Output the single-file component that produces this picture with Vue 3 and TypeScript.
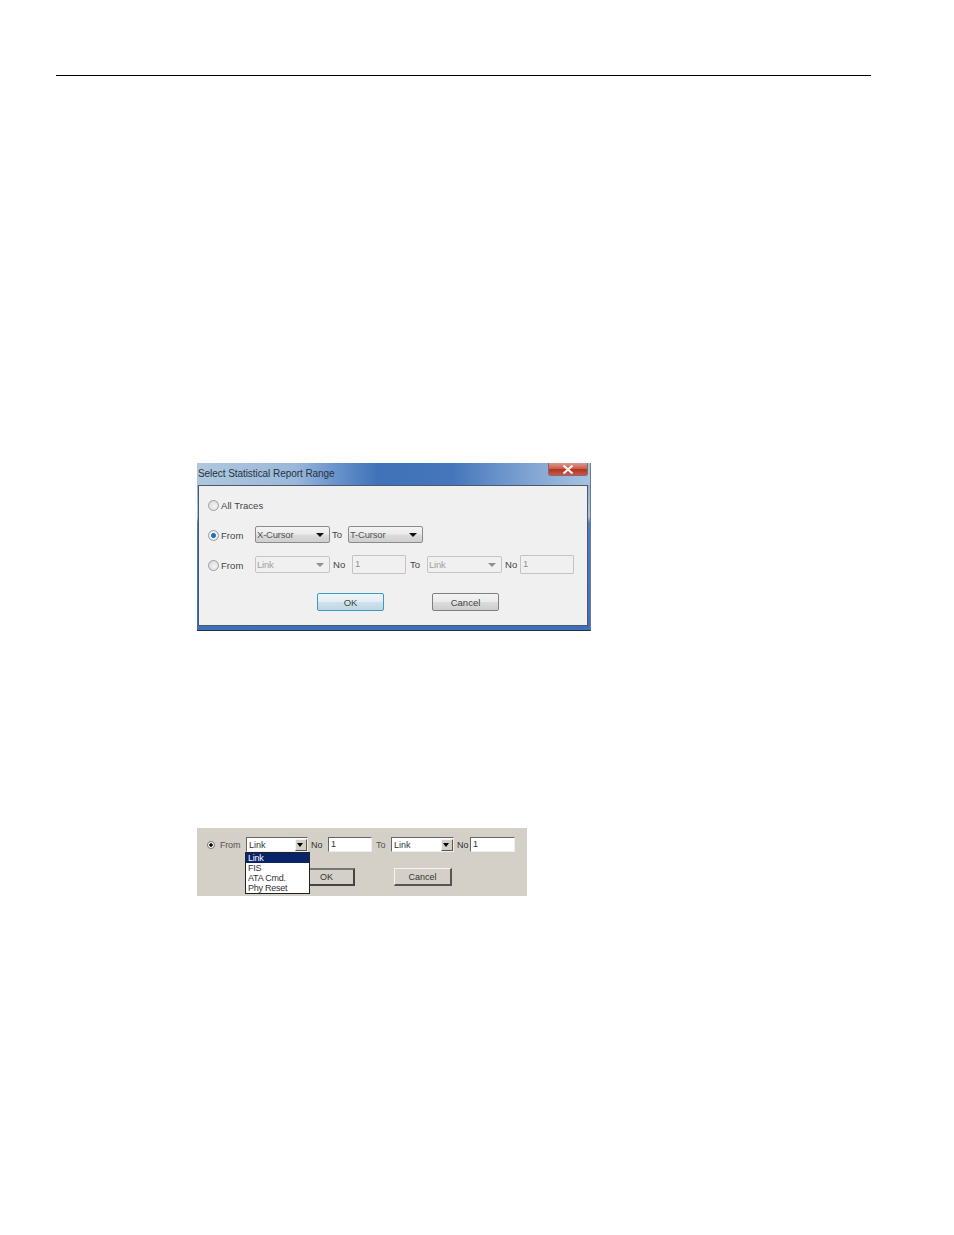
<script setup lang="ts">
const listItems: string[] = ['Link', 'FIS', 'ATA Cmd.', 'Phy Reset']
</script>

<template>
  <div class="page">
    <div class="rule"></div>

    <!-- Windows 7 style dialog -->
    <div class="dlg">
      <div class="dlg-title">
        <span>Select Statistical Report Range</span>
        <div class="dlg-close">
          <svg width="12" height="9" viewBox="0 0 12 9">
            <path d="M1.5 0.5 L10.5 8.5 M10.5 0.5 L1.5 8.5" stroke="#f4f0f0" stroke-width="2.2" fill="none" />
          </svg>
        </div>
      </div>
      <div class="dlg-body">
        <div class="row row-a">
          <span class="radio"></span>
          <span class="lbl">All Traces</span>
        </div>
        <div class="row row-b">
          <span class="radio on"></span>
          <span class="lbl w-from">From</span>
          <div class="sel"><span>X-Cursor</span><i class="arrow"></i></div>
          <span class="lbl w-to">To</span>
          <div class="sel"><span>T-Cursor</span><i class="arrow"></i></div>
        </div>
        <div class="row row-c">
          <span class="radio"></span>
          <span class="lbl w-from">From</span>
          <div class="sel off"><span>Link</span><i class="arrow"></i></div>
          <span class="lbl w-no">No</span>
          <div class="inp"><span>1</span></div>
          <span class="lbl w-to2">To</span>
          <div class="sel off"><span>Link</span><i class="arrow"></i></div>
          <span class="lbl w-no2">No</span>
          <div class="inp"><span>1</span></div>
        </div>
        <div class="row row-d">
          <button class="btn def">OK</button>
          <button class="btn">Cancel</button>
        </div>
      </div>
    </div>

    <!-- classic style dialog crop -->
    <div class="old">
      <div class="old-row">
        <span class="old-radio"></span>
        <span class="old-lbl from">From</span>
        <div class="old-sel"><span>Link</span><i class="old-drop"></i></div>
        <span class="old-lbl no">No</span>
        <div class="old-inp">1</div>
        <span class="old-lbl to">To</span>
        <div class="old-sel two"><span>Link</span><i class="old-drop"></i></div>
        <span class="old-lbl no2">No</span>
        <div class="old-inp two">1</div>
      </div>
      <div class="old-btns">
        <button class="old-btn">OK</button>
        <button class="old-btn cancel">Cancel</button>
      </div>
      <ul class="old-list">
        <li v-for="(item, i) in listItems" :key="item" :class="{ hot: i === 0 }">{{ item }}</li>
      </ul>
    </div>
  </div>
</template>

<style>
html, body { background: #fff; }
</style>

<style scoped>
.page {
  width: 954px;
  height: 1235px;
  overflow: hidden;
  padding-top: 75px;
  box-sizing: border-box;
  font-family: "Liberation Sans", Arial, sans-serif;
  color: #444;
}
.rule {
  margin-left: 56px;
  width: 815px;
  height: 1px;
  background: #000;
}

.dlg {
  margin: 387px 0 0 197px;
  width: 394px;
  height: 168px;
  box-sizing: border-box;
  background: linear-gradient(180deg, #7fa6d4 0, #a9c4e0 32%, #4a7fc4 36%, #3d70b8 100%);
  border-right: 1px solid #6a7a90;
  border-bottom: 1px solid #22324a;
  padding: 0 2px 4px 1px;
  display: flex;
  flex-direction: column;
}
.dlg-title {
  height: 22px;
  flex: none;
  margin-left: -1px;
  margin-right: -2px;
  display: flex;
  justify-content: space-between;
  align-items: flex-start;
  background: linear-gradient(90deg, #b0c8de 0, #9ab8da 25%, #6a94cc 35%, #3f72b8 46%, #4576bb 65%, #7ea3d2 84%, #a8c2e0 100%);
  font-size: 10px;
  line-height: 21px;
  letter-spacing: -0.06px;
  color: #26333f;
  padding-left: 1px;
  padding-right: 2px;
}
.dlg-close {
  width: 40px;
  height: 13px;
  box-sizing: border-box;
  background: linear-gradient(180deg, #d9998c 0, #c9624f 45%, #b03420 55%, #c9574a 100%);
  border: 1px solid #8a6a68;
  border-top: none;
  border-radius: 0 0 3px 3px;
  display: flex;
  align-items: center;
  justify-content: center;
}
.dlg-body {
  flex: 1;
  background: #f0f0f0;
  border: 1px solid #4a5a6a;
  box-sizing: border-box;
  position: relative;
  padding-left: 9px;
  font-size: 9.5px;
}
.row {
  display: flex;
  align-items: center;
}
.row-a { height: 14px; margin-top: 12px; }
.row-b { height: 17px; margin-top: 14px; }
.row-c { height: 17px; margin-top: 13px; }
.row-d { height: 18px; margin-top: 20px; padding-left: 109px; gap: 48px; }

.radio {
  width: 11px;
  height: 11px;
  box-sizing: border-box;
  flex: none;
  border-radius: 50%;
  border: 1px solid #9a9ea3;
  background: radial-gradient(circle at 60% 60%, #f4f4f4 0, #d4d4d4 100%);
}
.row-b .radio, .row-c .radio { margin-top: 1px; }
.radio.on {
  background: radial-gradient(circle, #1a5fa8 0, #2f86cf 38%, #eef2f4 44%, #dcdcdc 100%);
}
.lbl { letter-spacing: 0.05px; white-space: nowrap; }
.row > .radio + .lbl { margin-left: 2px; }
.row-b .lbl.w-from, .row-c .lbl.w-from { margin-top: 1px; }
.w-from { width: 34px; flex: none; }
.w-to { width: 16px; flex: none; text-align: left; margin-left: 2px; }
.w-no { width: 19px; flex: none; margin-left: 3px; }
.w-to2 { width: 17px; flex: none; margin-left: 4px; }
.w-no2 { width: 15px; flex: none; margin-left: 3px; }

.sel {
  width: 75px;
  height: 17px;
  box-sizing: border-box;
  flex: none;
  border: 1px solid #8b8b8b;
  border-radius: 2px;
  background: linear-gradient(180deg, #f3f3f3 0, #ebebeb 48%, #dcdcdc 52%, #cfcfcf 100%);
  display: flex;
  align-items: center;
  justify-content: space-between;
  padding: 0 5px 0 1px;
  letter-spacing: -0.2px;
  color: #555;
}
.sel.off {
  background: #f0f0f0;
  border-color: #c4c4c4;
  color: #a0a0a0;
}
.arrow {
  width: 0;
  height: 0;
  border-left: 4px solid transparent;
  border-right: 4px solid transparent;
  border-top: 4px solid #111;
}
.sel.off .arrow { border-top-color: #8f8f8f; }
.inp {
  width: 54px;
  height: 19px;
  box-sizing: border-box;
  flex: none;
  border: 1px solid #c4c4c4;
  border-radius: 1px;
  padding-left: 2px;
  line-height: 15px;
  color: #909090;
}
.btn {
  width: 67px;
  height: 18px;
  padding: 0;
  box-sizing: border-box;
  border: 1px solid #7f7f7f;
  border-radius: 2px;
  background: linear-gradient(180deg, #f4f4f4 0, #ebebeb 48%, #dcdcdc 52%, #cecece 100%);
  font: 9.5px "Liberation Sans", Arial, sans-serif;
  color: #444;
}
.btn.def {
  border-color: #3c9ac0;
  background: linear-gradient(180deg, #eef6fa 0, #e2eef4 48%, #cfe2ec 52%, #bfd6e2 100%);
}

.old {
  position: relative;
  margin: 197px 0 0 197px;
  width: 330px;
  height: 68px;
  box-sizing: border-box;
  background: #d4d0c8;
  font-size: 9px;
  color: #333;
  padding-top: 9px;
}
.old-row {
  display: flex;
  align-items: center;
  height: 15px;
  padding-left: 10px;
}
.old-radio {
  width: 8px;
  height: 8px;
  box-sizing: border-box;
  flex: none;
  border-radius: 50%;
  border: 1px solid #777;
  background: radial-gradient(circle, #111 0, #111 35%, #fff 45%);
}
.old-lbl { flex: none; white-space: nowrap; }
.old-lbl.from { width: 26px; margin-left: 5px; letter-spacing: -0.2px; color: #555; }
.old-lbl.no { width: 17px; margin-left: 3px; }
.old-lbl.to { width: 15px; margin-left: 4px; color: #555; }
.old-lbl.no2 { width: 13px; margin-left: 3px; }
.old-sel {
  width: 62px;
  height: 15px;
  box-sizing: border-box;
  flex: none;
  background: #fff;
  border: 1px solid;
  border-color: #666 #eee #eee #666;
  display: flex;
  align-items: center;
  justify-content: space-between;
  padding: 0 0 0 2px;
}
.old-sel.two { width: 63px; }
.old-drop {
  width: 12px;
  height: 12px;
  box-sizing: border-box;
  background: #d4d0c8;
  border: 1px solid;
  border-color: #f4f4f4 #555 #555 #f4f4f4;
  position: relative;
}
.old-drop::after {
  content: "";
  position: absolute;
  left: 1px;
  top: 3px;
  border-left: 3.5px solid transparent;
  border-right: 3.5px solid transparent;
  border-top: 4px solid #000;
}
.old-inp {
  width: 44px;
  height: 15px;
  box-sizing: border-box;
  flex: none;
  background: #fff;
  border: 1px solid;
  border-color: #666 #eee #eee #666;
  padding-left: 2px;
  line-height: 13px;
}
.old-inp.two { width: 45px; }
.old-btns {
  display: flex;
  margin: 16px 0 0 93px;
  gap: 39px;
  align-items: flex-start;
}
.old-btn {
  width: 65px;
  height: 18px;
  padding: 0 0 0 8px;
  box-sizing: border-box;
  background: #d4d0c8;
  border: 2px solid;
  border-color: #777 #444 #444 #777;
  font: 9px "Liberation Sans", Arial, sans-serif;
  color: #333;
}
.old-btn.cancel {
  width: 58px;
  padding: 1px 0 0;
  border-width: 1px 2px 2px 1px;
  border-color: #f4f4f4 #555 #555 #f4f4f4;
}
.old-list {
  position: absolute;
  left: 48px;
  top: 24px;
  width: 65px;
  height: 42px;
  box-sizing: border-box;
  margin: 0;
  padding: 0;
  list-style: none;
  background: #fff;
  border: 1px solid #222;
  line-height: 10px;
  letter-spacing: -0.25px;
}
.old-list li { padding-left: 2px; height: 10px; white-space: nowrap; }
.old-list li.hot { background: #0a246a; color: #fff; }
</style>
